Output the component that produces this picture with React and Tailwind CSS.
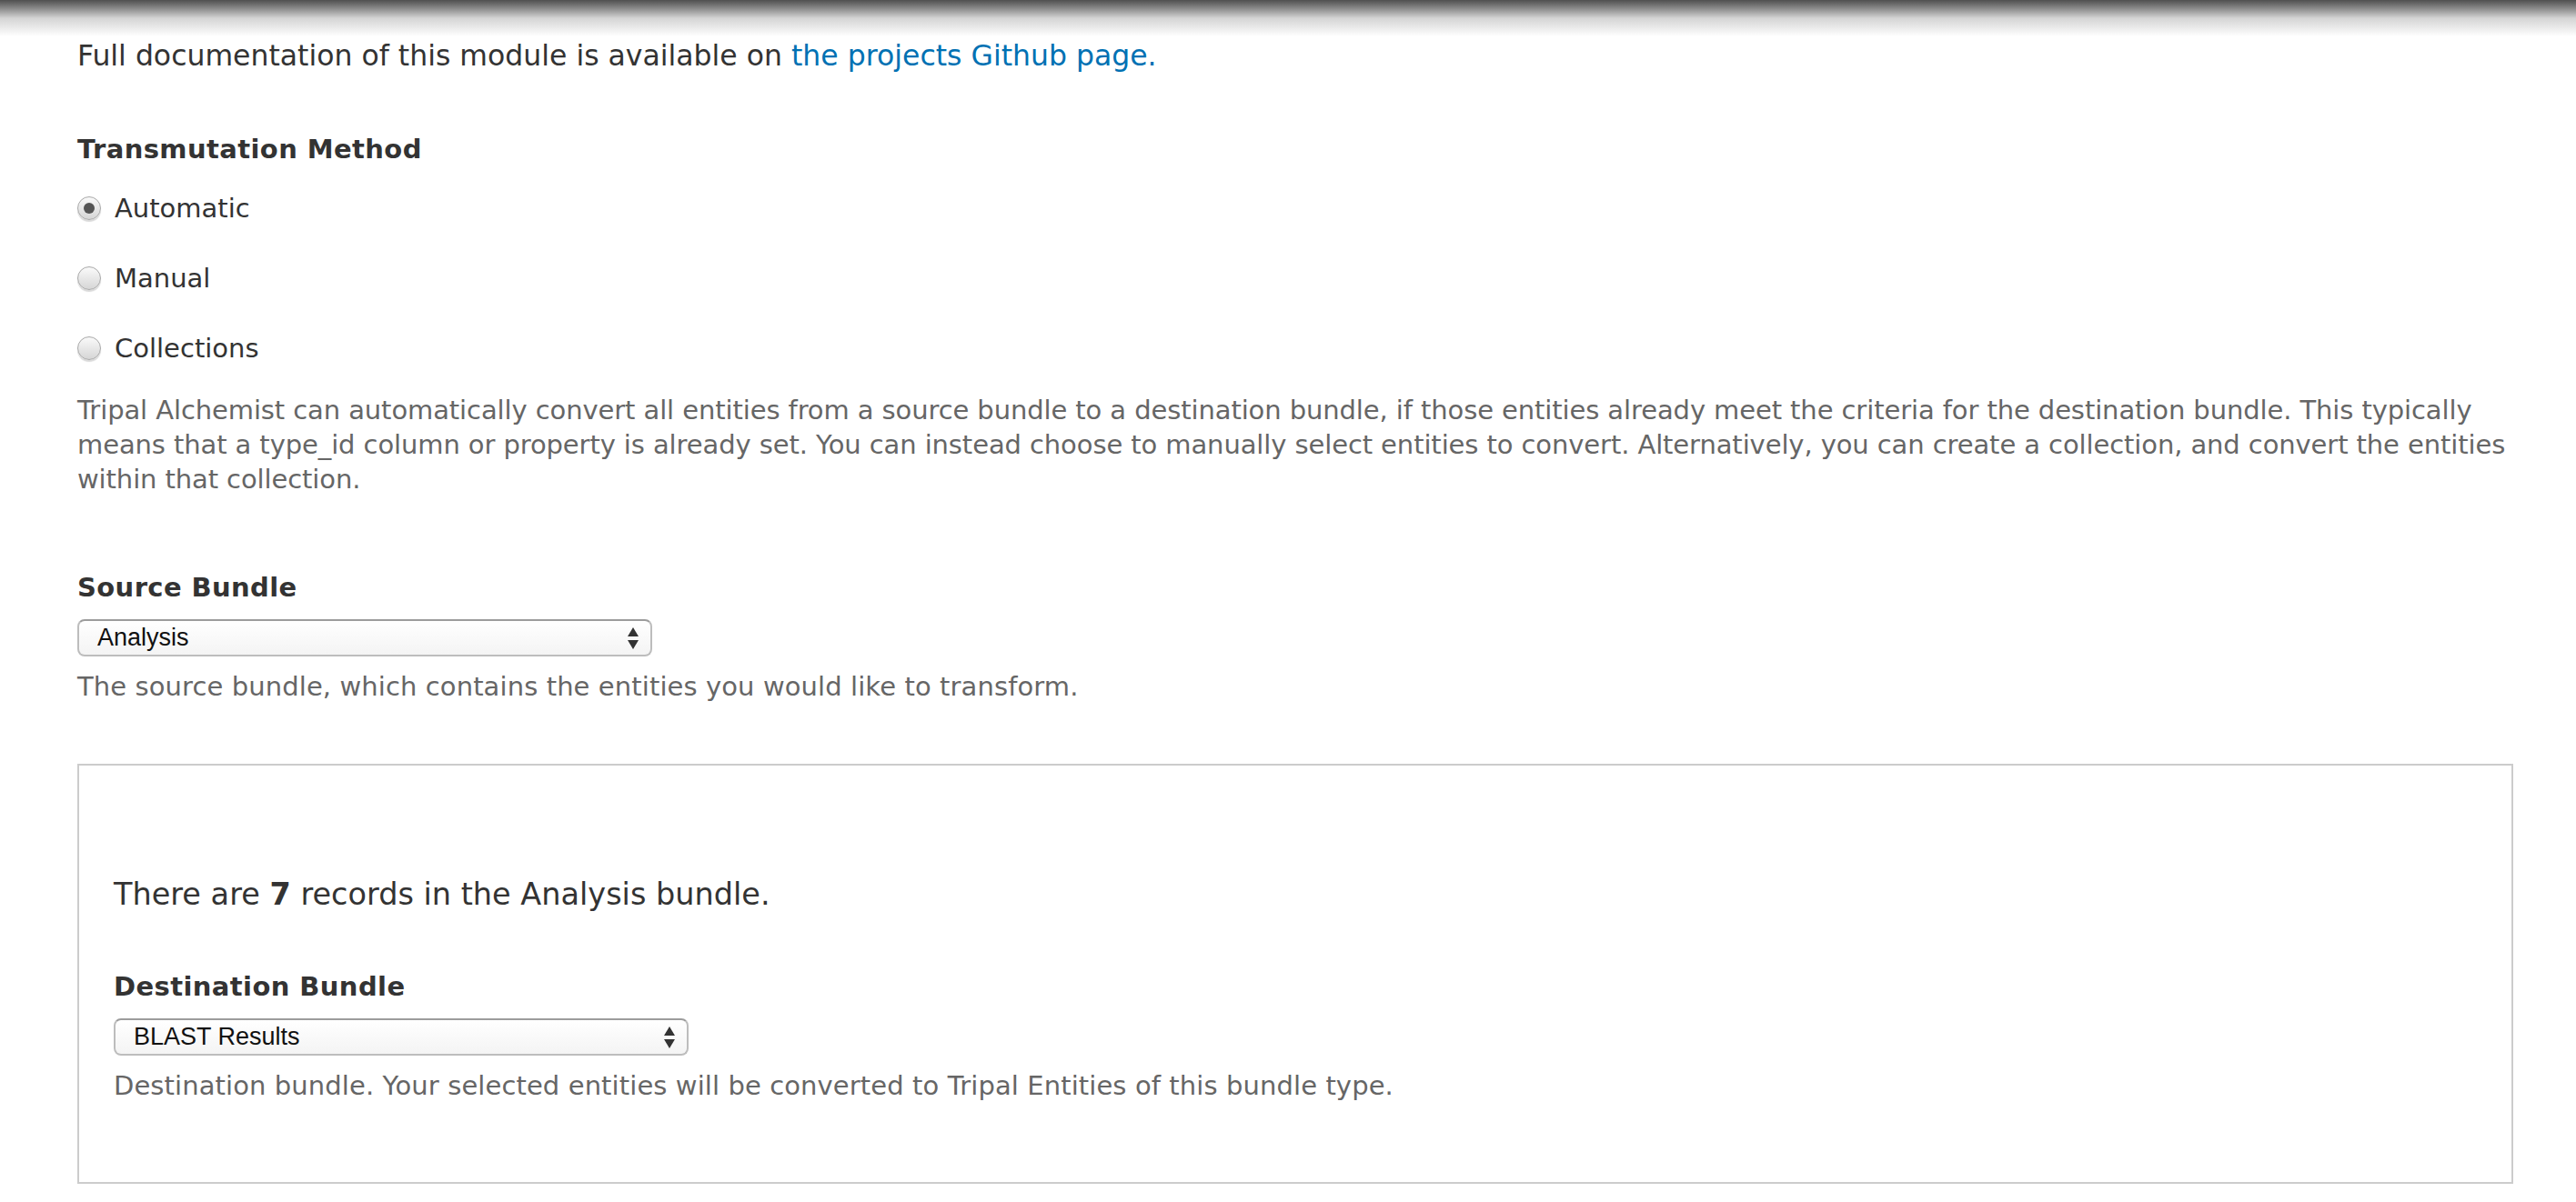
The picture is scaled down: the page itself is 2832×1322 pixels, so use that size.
import React from 'react';

const font = { fontFamily: '"DejaVu Sans", "Lucida Grande", sans-serif' };

function Radio({ label, checked }) {
    return (
        <label className="flex items-center h-[38px] gap-[15px]">
            <span className="w-[26px] h-[26px] rounded-full border border-[#a8a8a8] bg-gradient-to-b from-[#fafafa] to-[#d6d6d6] shadow-[0_2px_1px_rgba(0,0,0,0.15)] flex items-center justify-center">
                {checked && <span className="w-[12px] h-[12px] rounded-full bg-[#555]" />}
            </span>
            <span className="text-[#333]">{label}</span>
        </label>
    );
}

function FakeSelect({ value }) {
    return (
        <div className="w-[632px] h-[41px] rounded-[8px] border-2 border-[#bdbdbd] border-t-[#9c9c9c] bg-gradient-to-b from-white to-[#f4f4f4] flex items-center justify-between pl-[20px] pr-[12px]">
            <span className="text-[27px] leading-none text-[#111] font-['Liberation_Sans',Arial,sans-serif]">{value}</span>
            {/* up/down arrows */}
            <svg width="14" height="26" viewBox="0 0 14 26">
                <path d="M7 1 L13 11 L1 11 Z" fill="#333" />
                <path d="M7 25 L13 15 L1 15 Z" fill="#333" />
            </svg>
        </div>
    );
}

export default function App() {
    return (
        <div className="relative min-h-[1322px] bg-white text-[29px] leading-[38px]" style={font}>
            {/* top shadow */}
            <div className="absolute top-0 left-0 right-0 h-[40px] bg-gradient-to-b from-[#505050] via-[#d4d4d4] to-white" />

            <div className="ml-[85px] w-[2678px] pt-[42px]">
                <p className="text-[#333] text-[31.5px]">
                    Full documentation of this module is available on{' '}
                    <a href="#" className="text-[#0071b3]">the projects Github page.</a>
                </p>

                {/* Transmutation method */}
                <div className="mt-[65px]">
                    <div className="font-bold text-[#333] tracking-[0.4px]">Transmutation Method</div>
                    <div className="mt-[27px] flex flex-col gap-[39px]">
                        <Radio label="Automatic" checked />
                        <Radio label="Manual" />
                        <Radio label="Collections" />
                    </div>
                    <p className="mt-[30px] mr-[-20px] text-[#666] tracking-[-0.1px]">
                        Tripal Alchemist can automatically convert all entities from a source bundle to a destination bundle, if those entities already meet the criteria for the destination bundle. This typically means that a type_id column or property is already set. You can instead choose to manually select entities to convert. Alternatively, you can create a collection, and convert the entities within that collection.
                    </p>
                </div>

                {/* Source bundle */}
                <div className="mt-[81px]">
                    <div className="font-bold text-[#333] tracking-[0.4px]">Source Bundle</div>
                    <div className="mt-[16px]">
                        <FakeSelect value="Analysis" />
                    </div>
                    <p className="mt-[14px] text-[#666] tracking-[0.1px]">The source bundle, which contains the entities you would like to transform.</p>
                </div>

                {/* Destination fieldset */}
                <div className="mt-[66px] border-2 border-[#ccc] pt-[123px] pb-[87px] px-[38px]">
                    <p className="text-[#333] text-[33.5px]">
                        There are <span className="font-bold">7</span> records in the Analysis bundle.
                    </p>
                    <div className="mt-[63px]">
                        <div className="font-bold text-[#333] tracking-[0.4px]">Destination Bundle</div>
                        <div className="mt-[16px]">
                            <FakeSelect value="BLAST Results" />
                        </div>
                        <p className="mt-[14px] text-[#666] tracking-[0.1px]">
                            Destination bundle. Your selected entities will be converted to Tripal Entities of this bundle type.
                        </p>
                    </div>
                </div>
            </div>
        </div>
    );
}
